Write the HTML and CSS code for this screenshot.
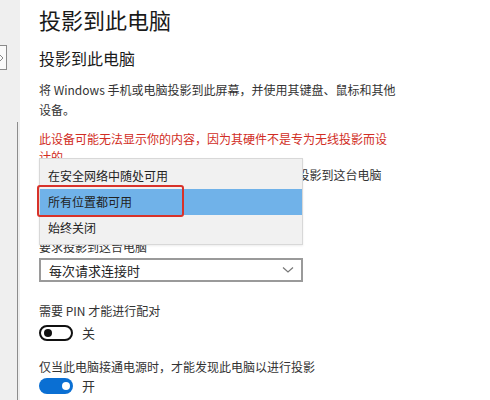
FILE: index.html
```html
<!DOCTYPE html>
<html lang="zh-CN">
<head>
    <meta charset="UTF-8">
    <title>投影到此电脑</title>
    <link rel="stylesheet" href="styles.css">
</head>
<body>
    <div class="window">
        <div class="sidebar">
            <div class="search-edge">
                <svg width="5" height="8" viewBox="0 0 5 8">
                    <path d="M0 1 L3 4 L0 7" fill="none" stroke="#888" stroke-width="1"/>
                </svg>
            </div>
            <div class="side-line"></div>
        </div>

        <div class="content">
            <h1>投影到此电脑</h1>
            <h2>投影到此电脑</h2>
            <p class="desc">将 Windows 手机或电脑投影到此屏幕，并使用其键盘、鼠标和其他设备。</p>
            <p class="warning">此设备可能无法显示你的内容，因为其硬件不是专为无线投影而设计的</p>

            <div class="field first-field">
                <div class="label">当你同意时，部分 Windows 和 Android 设备可投影到这台电脑</div>
                <div class="select hidden-select">所有位置都可用</div>

                <ul class="popup">
                    <li>在安全网络中随处可用</li>
                    <li class="selected">所有位置都可用</li>
                    <li>始终关闭</li>
                </ul>
            </div>

            <div class="field">
                <div class="label">要求投影到这台电脑</div>
                <div class="select">
                    <span>每次请求连接时</span>
                    <svg class="chevron" width="12" height="8" viewBox="0 0 12 8">
                        <path d="M1 1.5 L6 6 L11 1.5" fill="none" stroke="#777" stroke-width="1.2"/>
                    </svg>
                </div>
            </div>

            <div class="setting pin">
                <div class="label">需要 PIN 才能进行配对</div>
                <div class="toggle-row">
                    <span class="toggle off"><span class="knob"></span></span>
                    <span class="state">关</span>
                </div>
            </div>

            <div class="setting power">
                <div class="label">仅当此电脑接通电源时，才能发现此电脑以进行投影</div>
                <div class="toggle-row">
                    <span class="toggle on"><span class="knob"></span></span>
                    <span class="state">开</span>
                </div>
            </div>
        </div>
    </div>
</body>
</html>
```

FILE: styles.css
```css
body {
    margin: 0;
    font-family: "Noto Sans CJK SC", "Noto Sans", sans-serif;
    color: #222;
    background: #fff;
}
.window {
    display: flex;
    width: 490px;
    height: 400px;
    overflow: hidden;
}
.sidebar {
    width: 20px;
    flex-shrink: 0;
    background: #efefef;
    position: relative;
}
.search-edge {
    margin-top: 45px;
    width: 6px;
    height: 23px;
    border: 1px solid #8a8a8a;
    border-left: none;
    background: #fafafa;
    display: flex;
    align-items: center;
}
.side-line {
    position: absolute;
    left: 17px;
    top: 122px;
    bottom: 0;
    width: 1px;
    background: #8c8c8c;
}
.content {
    flex: 1;
    padding-left: 19px;
    padding-right: 10px;
}
h1 {
    margin: 4px 0 0;
    font-size: 22px;
    line-height: 30px;
    font-weight: normal;
    color: #1a1a1a;
}
h2 {
    margin: 12px 0 0;
    font-size: 16px;
    line-height: 24px;
    font-weight: normal;
    color: #1a1a1a;
}
.desc {
    margin: 10px 0 0;
    width: 365px;
    font-size: 12px;
    line-height: 20px;
    color: #333;
}
.warning {
    margin: 10px 0 0;
    width: 350px;
    font-size: 12px;
    line-height: 18px;
    color: #d12d24;
}
.field {
    position: relative;
}
.label {
    font-size: 12px;
    line-height: 18px;
    color: #333;
    white-space: nowrap;
}
.first-field .label {
    word-spacing: 2px;
}
.select {
    box-sizing: border-box;
    margin-top: 2px;
    width: 264px;
    height: 24px;
    border: 2px solid #9a9a9a;
    display: flex;
    align-items: center;
    justify-content: space-between;
    padding-left: 8px;
    font-size: 13px;
    color: #222;
}
.chevron {
    margin-right: 7px;
}
.hidden-select {
    margin-top: 6px;
    margin-bottom: 24px;
}
.popup {
    position: absolute;
    z-index: 1;
    left: 0;
    top: -8px;
    width: 262px;
    margin: 0;
    padding: 4px 0 3px;
    list-style: none;
    background: #f1f1f1;
    border: 1px solid #d8d8d8;
    box-shadow: 0 1px 2px rgba(0, 0, 0, 0.08);
}
.popup li {
    height: 26px;
    line-height: 26px;
    padding-left: 8px;
    font-size: 12px;
    color: #222;
}
.popup li.selected {
    position: relative;
    background: #70b2e9;
}
.popup li.selected::after {
    content: "";
    position: absolute;
    left: -3px;
    top: -4px;
    width: 143px;
    height: 28px;
    border: 2px solid #d8322a;
    border-radius: 3px;
}
.setting {
    margin-top: 20px;
}
.power {
    margin-top: 17px;
}
.toggle-row {
    display: flex;
    align-items: center;
    margin-top: 5px;
}
.power .toggle-row {
    margin-top: 2px;
}
.toggle {
    box-sizing: border-box;
    width: 34px;
    height: 16px;
    border-radius: 8px;
    display: flex;
    align-items: center;
    padding: 0 3px;
}
.toggle.off {
    border: 2px solid #111;
}
.toggle.on {
    background: #0a6fd3;
    justify-content: flex-end;
}
.knob {
    width: 8px;
    height: 8px;
    border-radius: 50%;
    background: #111;
}
.toggle.on .knob {
    background: #fff;
}
.state {
    margin-left: 9px;
    font-size: 13px;
    line-height: 16px;
    color: #333;
}
```
